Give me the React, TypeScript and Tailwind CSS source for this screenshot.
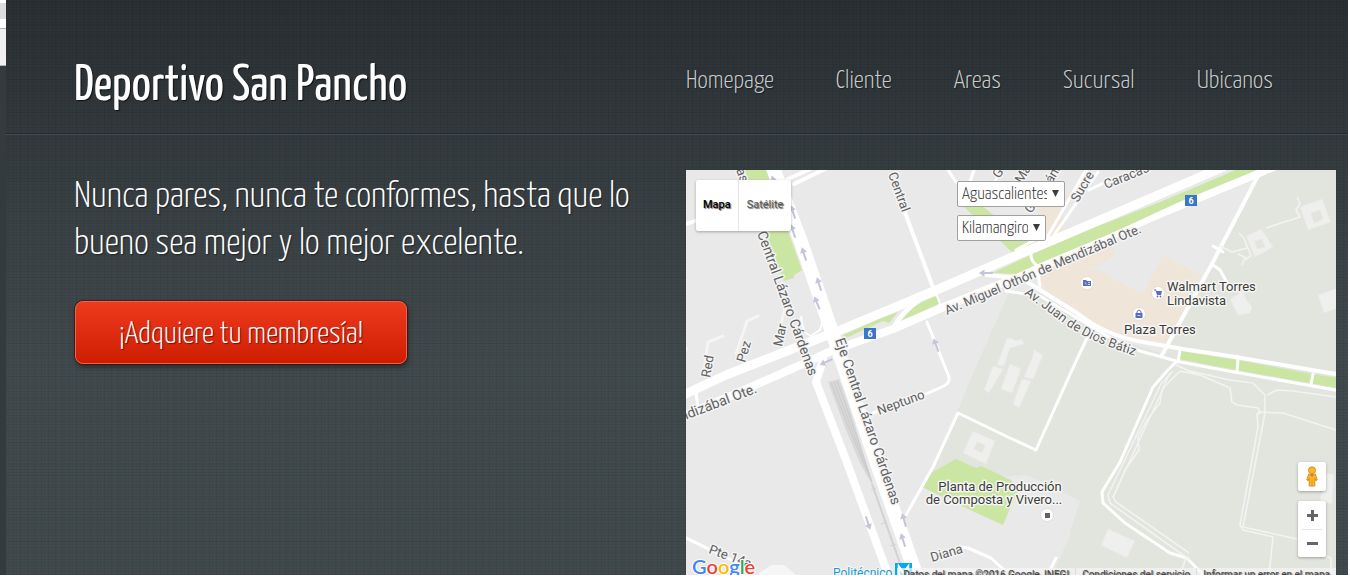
import React from "react";

const WEAVE =
  "bg-[repeating-linear-gradient(0deg,rgba(0,0,0,0.05)_0_1px,transparent_1px_3px),repeating-linear-gradient(90deg,rgba(255,255,255,0.012)_0_1px,transparent_1px_4px),repeating-linear-gradient(90deg,rgba(0,0,0,0.05)_0_1px,transparent_1px_7px),repeating-linear-gradient(0deg,rgba(0,0,0,0.04)_0_1px,transparent_1px_11px),linear-gradient(180deg,#282e32_0px,#32393d_133px,#383f43_200px,#40494c_360px,#40494c_100%)]";

const DISPLAY = "font-['Yanone_Kaffeesatz','Open_Sans_Condensed_Light',sans-serif]";
const ROBOTO = "font-[Roboto,sans-serif]";

type Arrow = { x: number; y: number; r: number };

const arrows: Arrow[] = [
  { x: 88, y: 12, r: -20 },
  { x: 107, y: 42, r: -18 },
  { x: 107, y: 61, r: -18 },
  { x: 118, y: 84, r: -18 },
  { x: 133, y: 114, r: -18 },
  { x: 131, y: 133, r: -22 },
  { x: 250, y: 175, r: -20 },
  { x: 300, y: 103, r: -90 },
  { x: 140, y: 192, r: -115 },
  { x: 182, y: 353, r: 162 },
  { x: 218, y: 350, r: -16 },
  { x: 217, y: 370, r: -18 },
];

type StreetLabel = { x: number; y: number; r: number; text: string; size?: number };

const streets: StreetLabel[] = [
  { x: 50, y: 0, r: 70, text: "as" },
  { x: 71, y: 63, r: 70, text: "Central Lázaro Cárdenas", size: 14 },
  { x: 149, y: 170, r: 71, text: "Eje Central Lázaro Cárdenas", size: 14 },
  { x: 202, y: 4, r: 70, text: "Central" },
  { x: 24, y: 208, r: -80, text: "Red" },
  { x: 59, y: 193, r: -74, text: "Pez" },
  { x: 96, y: 177, r: -78, text: "Mar" },
  { x: -11, y: 254, r: -21, text: "endizábal Ote.", size: 14 },
  { x: 193, y: 245, r: -20, text: "Neptuno" },
  { x: 246, y: 392, r: -17, text: "Diana" },
  { x: 22, y: 383, r: 20, text: "Pte 14a" },
  { x: 392, y: 33, r: -60, text: "Sucre" },
  { x: 420, y: 19, r: -22, text: "Caracas" },
  { x: 313, y: 9, r: -55, text: "G" },
  { x: 336, y: 14, r: -60, text: "Mar" },
  { x: 345, y: 44, r: -55, text: "G" },
  { x: 366, y: 14, r: -60, text: "ána" },
  { x: 261, y: 145, r: -23, text: "Av. Miguel Othón de Mendizábal Ote." },
];

function Route({ x, y }: { x: number; y: number }) {
  return (
    <g transform={`translate(${x} ${y})`}>
      <rect width="12" height="11" fill="#3a76c9" />
      <text x="6" y="9" textAnchor="middle" fontSize="9" fontWeight="700" fill="#fff">6</text>
    </g>
  );
}

function StreetMap() {
  return (
    <svg
      viewBox="0 0 650 405"
      preserveAspectRatio="xMidYMid slice"
      className={`block size-full ${ROBOTO}`}
      role="img"
      aria-label="Mapa"
    >
      <rect width="650" height="405" fill="#e9e9e9" />
      <path d="M574 0 527 92 478 184 421 166 391 147 354 122 324 120 286 206 243 310 340 305 394 331 383 362 384 366 360 405H650V0Z" fill="#e2e4de" />
      <path d="M341 305 394 331 384 362 384 366 366 405H300L325 340Z" fill="#e9e9e9" />
      <g fill="#f0e5d9">
        <path d="M354 36 374 38 379 62 356 76 345 74Z" />
        <path d="M352 96 424 73 430 86 399 101 411 99 439 115 457 123 477 85 515 105 484 174 437 167 404 152 374 130 354 116Z" />
      </g>
      <g fill="#cbe6a3">
        <path d="M59 0H80L116 100 108 105V108L98 111 75 55Z" />
        <path d="M277 36H296L346 74 327 83Z" />
        <path d="M245 303 270 289 290 298 295 296 325 310 332 320 317 355 284 340 236 317Z" />
      </g>
      <g fill="none" stroke="#fff" strokeLinejoin="round" strokeLinecap="round">
        <path d="M-5 226 40 205 157 159 248 121 324 88 384 63 537-3" strokeWidth="9" />
        <path d="M-5 247 40 228 110 197 143 182 207 159 253 139 354 98 464 48 590-4" strokeWidth="8" />
        <path d="M137 190 130 212 135 225 160 290 204 410" strokeWidth="8" />
        <path d="M86-5 115 72 147 165 188 285 232 410" strokeWidth="14" />
        <g strokeWidth="4">
          <path d="M218 40 248 120 254 138M-3 55 12 50M100 10 135-6M108 14 145-4" />
          <path d="M241 152 263 207Q264 213 258 216L240 224 187 243" strokeWidth="3" />
          <path d="M320 121 354 126 391 148 421 166 454 181 494 192 537 200 655 221" strokeWidth="3" />
          <path d="M574 2 527 92 476 185" />
          <path d="M490 192 482 200 467 217 434 292 416 322 417 333 439 353 484 383 501 388 518 406" strokeWidth="3" />
          <path d="M401 168 386 200 350 280 324 268 272 243 247 297 220 345" strokeWidth="3" />
          <path d="M401-2 362 66M412 2 366 68M403 20 424 10" strokeWidth="3" />
          <path d="M262 0 270 12 285 20M288 0 284 12M315 0 300 30M330 80 352 68" strokeWidth="3" />
          <path d="M527 76 537 82M527 95 534 100 544 118M-2 367 60 397M275 377 282 378 305 388 318 400M370 388 360 408M10 222 12 238" strokeWidth="3" />
          <path d="M115 147 118 162 125 166 134 160 137 150" strokeWidth="2" />
        </g>
      </g>
      <g fill="#cbe6a3">
        <path d="M306 103 349 83 407 58 474 32 538 5 549 0H571L491 33 424 64 354 93 330 104Z" />
        <path d="M157 165 193 149 212 142 203 153 197 151 160 168Z" />
        <path d="M214 151 230 135 250 126 253 134Z" />
        <path d="M494 181 563 192 625 204 651 208V218L600 209 550 200 493 189Z" />
      </g>
      <g fill="none" stroke="#fff" strokeLinejoin="round" strokeLinecap="round">
        <path d="M300 105 335 108 354 120 391 143Q420 166 457 172L497 179 550 187 655 205" strokeWidth="4" />
        <path d="M345 82Q344 90 351 96L354 116" strokeWidth="3" />
        <path d="M494 180 492 192M552 190 551 202M627 204 625 214" strokeWidth="3" />
        <path d="M207 158Q218 140 232 131" strokeWidth="5" />
      </g>
      <g fill="none" stroke="#f5f5f3" strokeWidth="3" strokeLinecap="round">
        <path d="M72 146 61 151 50 184M37 166 22 172 18 200M100 135 90 172M0 180V178" />
      </g>
      <g fill="none" stroke="#f3f3f1" strokeWidth="1.6" strokeLinejoin="round">
        <path d="M487 201 475 214 422 325 424 333 504 390M493 202 478 217 427 327 430 332 503 383" />
        <path d="M484 203 476 220 474 233 461 250 452 267 453 280 439 300 427 328" />
        <path d="M493 201 514 205 544 218 546 232 551 235 572 238 574 243 571 244 572 257 554 355 557 360 587 367 583 405" />
        <path d="M504 201 544 210 567 213 579 225V243L557 357 611 369M581 225 591 220 607 221 650 227M572 242 597 243 650 260" />
        <path d="M500 388 494 405M640 386 645 388V405M580 58 614 47 610 40 614 34 611 27M552 84 560 88M534 76 546 82 561 78M553 63 558 68 561 76 565 86 558 90 556 95" />
        <path d="M490 195 512 205" />
      </g>
      <g fill="#efefed" stroke="#e9e9e7" strokeWidth="1" fillRule="evenodd">
        <path d="M614 37 636 29 645 52 622 60ZM625 43 634 40 637 49 628 53Z" />
        <path d="M560 66 575 59 587 77 569 87ZM569 71 576 69 579 77 571 79Z" />
        <path d="M544 129 557 121 560 129 566 137 564 143 552 145Z" />
        <path d="M632 125 655 117V137L638 143Z" />
        <path d="M287 261 309 271 300 294 277 283ZM291 272 299 275 296 283 288 279Z" />
        <path d="M422 359 449 371 441 388 415 375Z" />
        <path d="M640 303 648 305 646 334 634 331Z" />
        <path d="M321 168 327 169 329 171 336 169 338 174 324 178 318 196 311 195Z" />
        <path d="M348 180 357 185 347 209 338 207 346 188Z" />
        <path d="M324 194 335 199 326 223 315 219Z" />
        <path d="M307 196 317 199 303 223 298 220Z" />
        <path d="M336 209 345 211 333 238 327 234Z" />
      </g>
      <path d="M142 212 153 209 164 239 177 282 188 318 174 293 160 260Z" fill="#d8d8d8" />
      <path d="M145 213 163 258 181 301M148 212 167 262 184 308M151 211 170 264 186 312" fill="none" stroke="#cbcbcb" strokeWidth="1" />
      <path d="M186 314 215 396" fill="none" stroke="#d2d2d2" strokeWidth="2" />
      <path d="M185 320 190 318M195 354 201 352M204 376 210 374" fill="none" stroke="#d2d2d2" strokeWidth="1" />
      <path d="M75 402 85 395H98L110 405H72Z" fill="#f6f6f6" />
      {arrows.map((a) => (
        <path
          key={`${a.x}-${a.y}`}
          transform={`translate(${a.x} ${a.y}) rotate(${a.r})`}
          d="M0-7 3.5-1.5H1V7H-1V-1.5H-3.5Z"
          fill="#c3c5da"
        />
      ))}
      <Route x={178} y={158} />
      <Route x={499} y={25} />
      <g fill="#616161" stroke="#f4f4f4" strokeWidth="3" strokeLinejoin="round" paintOrder="stroke">
        {streets.map((s) => (
          <text key={`${s.text}-${s.x}`} fontSize={s.size ?? 13} transform={`translate(${s.x} ${s.y}) rotate(${s.r})`}>
            {s.text}
          </text>
        ))}
        <path id="juan" d="M338 124 372 149Q400 172 460 189" fill="none" stroke="none" />
        <text fontSize="13">
          <textPath href="#juan">Av. Juan de Dios Bátiz</textPath>
        </text>
      </g>
      <g fill="#fff" stroke="#d5d0cc" strokeWidth="0.6">
        <circle cx="401" cy="113" r="6.5" />
        <circle cx="472" cy="123" r="6.5" />
        <circle cx="453" cy="144" r="6.5" />
        <circle cx="361" cy="345" r="6.5" />
      </g>
      <g fill="#5a6cc0">
        <path d="M397 110H400L401 111H405V116H397Z" />
        <path d="M468 119.500H470L470.500 121H476L475 125H471L469.500 120.500H468Z" />
        <circle cx="471.500" cy="126.500" r="0.9" />
        <circle cx="474.500" cy="126.500" r="0.9" />
        <path d="M449.500 143H456.500V148H449.500Z" />
        <path d="M451 143V141.500Q453 138.500 455 141.500V143" fill="none" stroke="#5a6cc0" />
        <rect x="359" y="343" width="5" height="5" fill="#616161" stroke="none" />
      </g>
      <path d="M399 112.500 400.500 114.500M402 112.500H404M402 114.500H404M451.500 145.500H454.500" stroke="#fff" strokeWidth="0.7" />
      <g fontSize="13" fill="#3c3c3c" stroke="#f6f6f4" strokeWidth="3" strokeLinejoin="round" paintOrder="stroke">
        <text x="481" y="121">Walmart Torres</text>
        <text x="481" y="135">Lindavista</text>
        <text x="438" y="164">Plaza Torres</text>
        <text x="314" y="321" textAnchor="middle">Planta de Producción</text>
        <text x="308" y="334" textAnchor="middle">de Composta y Vivero...</text>
      </g>
      <text x="147" y="407" fontSize="12" fill="#1b9ad6" stroke="#f6f6f4" strokeWidth="2" paintOrder="stroke">Politécnico</text>
      <rect x="209" y="393" width="17" height="17" fill="#03a9f4" />
      <path d="M213 408V397L217.500 403 222 397V408" fill="none" stroke="#fff" strokeWidth="2.500" />
      <text x="6" y="404" fontFamily="Lato, sans-serif" fontSize="20" fontWeight="600" stroke="#fff" strokeWidth="2" paintOrder="stroke">
        <tspan fill="#4285f4">G</tspan>
        <tspan fill="#ea4335">o</tspan>
        <tspan fill="#fbbc05">o</tspan>
        <tspan fill="#4285f4">g</tspan>
        <tspan fill="#34a853">l</tspan>
        <tspan fill="#ea4335">e</tspan>
      </text>
    </svg>
  );
}

function Picker({ label, options, className }: { label: string; options: string[]; className: string }) {
  return (
    <label className={`relative block h-[26px] ${className}`}>
      <span className="sr-only">{label}</span>
      <select
        className={`size-full appearance-none rounded-xs border border-[#a0a0a0] bg-white pt-0.5 pr-[17px] pl-1 text-[18px] leading-[22px] font-light text-[#333] ${DISPLAY}`}
      >
        {options.map((o) => (
          <option key={o}>{o}</option>
        ))}
      </select>
      <svg viewBox="0 0 6 6" className="pointer-events-none absolute top-[9px] right-[6px] size-[7px]" aria-hidden="true">
        <path d="M0 0H6L3 6Z" fill="#3c3c3c" />
      </svg>
    </label>
  );
}

function Pegman() {
  return (
    <svg viewBox="0 0 12 22" className="h-[21px] w-3" aria-hidden="true">
      <path d="M2.500 8.500H9.500L11.500 14.500 10 15.500 9 13V21H3V13L2 15.500 0.500 14.500Z" fill="#fbb829" stroke="#c98210" strokeWidth="0.8" />
      <path d="M6 14V21" stroke="#c98210" strokeWidth="0.6" />
      <circle cx="6" cy="4.500" r="3.700" fill="#fbb829" stroke="#c98210" strokeWidth="0.8" />
      <path d="M4 9H8L6 11.500Z" fill="#e5652e" />
    </svg>
  );
}

const nav = ["Homepage", "Cliente", "Areas", "Sucursal", "Ubicanos"];

export default function App() {
  return (
    <div className="bg-white pb-[3px]">
      <div className="flex">
        <div className="flex w-1.5 shrink-0 flex-col overflow-hidden bg-[#343b3f]" aria-hidden="true">
          <div className="h-[3px] bg-white" />
          <div className="h-4 bg-[#dcdcdc]" />
          <div className="h-[9px] bg-white" />
          <div className="h-[38px] border-y border-[#b4b4b4] bg-[#f0f0f0]" />
        </div>
        <div className={`mr-0.5 min-w-0 flex-1 ${WEAVE} ${DISPLAY}`}>
          <header className="grid h-[134px] grid-cols-[612fr_650fr] border-b border-[#23292c] pr-3 pl-[68px] shadow-[0_1px_0_#424b50]">
            <h1 className="pt-[57px] text-[51px] leading-[60px] font-normal whitespace-nowrap text-white [text-shadow:1px_1px_1px_#111]">
              Deportivo San Pancho
            </h1>
            <nav className="flex gap-[62px] pt-[65px] text-[26px] leading-8 font-light whitespace-nowrap text-[#c8cccd] [text-shadow:1px_1px_1px_#1a1f22]">
              {nav.map((n) => (
                <a key={n} href="#">{n}</a>
              ))}
            </nav>
          </header>
          <main className="grid grid-cols-[612fr_650fr] pt-9 pr-3 pl-[68px]">
            <section className="pt-1">
              <p className="text-[37px] leading-[47px] font-light text-white [text-shadow:1px_1px_1px_#1f2527]">
                Nunca pares, nunca te conformes, hasta que lo
                <br />
                bueno sea mejor y lo mejor excelente.
              </p>
              <button
                type="button"
                className="mt-[33px] ml-px h-[63px] rounded-lg border border-[#f5604a] bg-linear-to-b from-[#ee3a1d] to-[#ce1c00] px-[43px] pt-1 text-[31px] leading-none font-light text-white shadow-[0_0_0_1px_rgba(60,10,5,0.6),1px_3px_5px_rgba(0,0,0,0.4)] [text-shadow:1px_1px_1px_#6d1105]"
              >
                ¡Adquiere tu membresía!
              </button>
            </section>
            <section className="relative h-[405px] overflow-hidden bg-[#e9e9e9]">
              <StreetMap />
              <div className={`absolute top-[10px] left-[10px] flex h-[51px] divide-x divide-[#e6e6e6] rounded-xs bg-white text-[11px] shadow-[0_1px_3px_rgba(0,0,0,0.3)] ${ROBOTO}`}>
                <button type="button" className="px-[7px] font-medium text-black [text-shadow:1px_1px_1px_rgba(0,0,0,0.6)]">Mapa</button>
                <button type="button" className="px-2 text-[#565656] [text-shadow:1px_1px_1px_rgba(0,0,0,0.6)]">Satélite</button>
              </div>
              <div className="absolute top-[11px] left-[271px] flex flex-col gap-2">
                <Picker label="Estado" options={["Aguascalientes"]} className="w-[108px]" />
                <Picker label="Sucursal" options={["Kilamangiro"]} className="w-[89px]" />
              </div>
              <div className="absolute right-[10px] bottom-[18px] flex w-7 flex-col gap-[10px]">
                <button type="button" aria-label="Street View" className="flex h-[29px] items-center justify-center rounded-xs bg-white shadow-[0_1px_3px_rgba(0,0,0,0.3)]">
                  <Pegman />
                </button>
                <div className="rounded-xs bg-white shadow-[0_1px_3px_rgba(0,0,0,0.3)]">
                  <button type="button" aria-label="Acercar" className="flex h-7 w-full items-center justify-center">
                    <svg viewBox="0 0 11 11" className="size-[11px]"><path d="M0 5.500H11M5.500 0V11" stroke="#666" strokeWidth="3" /></svg>
                  </button>
                  <div className="mx-1 h-px bg-[#e6e6e6]" />
                  <button type="button" aria-label="Alejar" className="flex h-[27px] w-full items-center justify-center">
                    <svg viewBox="0 0 11 11" className="size-[11px]"><path d="M0 5.500H11" stroke="#666" strokeWidth="3" /></svg>
                  </button>
                </div>
              </div>
              <div className={`absolute right-0 -bottom-[7px] flex h-[14px] bg-[#f5f5f5]/70 text-[10px] leading-[14px] whitespace-nowrap text-[#444] [text-shadow:1px_1px_1px_rgba(0,0,0,0.6)] ${ROBOTO}`}>
                <span className="px-[6px]">Datos del mapa ©2016 Google, INEGI</span>
                <a href="#" className="border-l border-[#ddd] px-[6px]">Condiciones del servicio</a>
                <a href="#" className="border-l border-[#ddd] px-[6px]">Informar un error en el mapa</a>
              </div>
            </section>
          </main>
        </div>
      </div>
    </div>
  );
}
